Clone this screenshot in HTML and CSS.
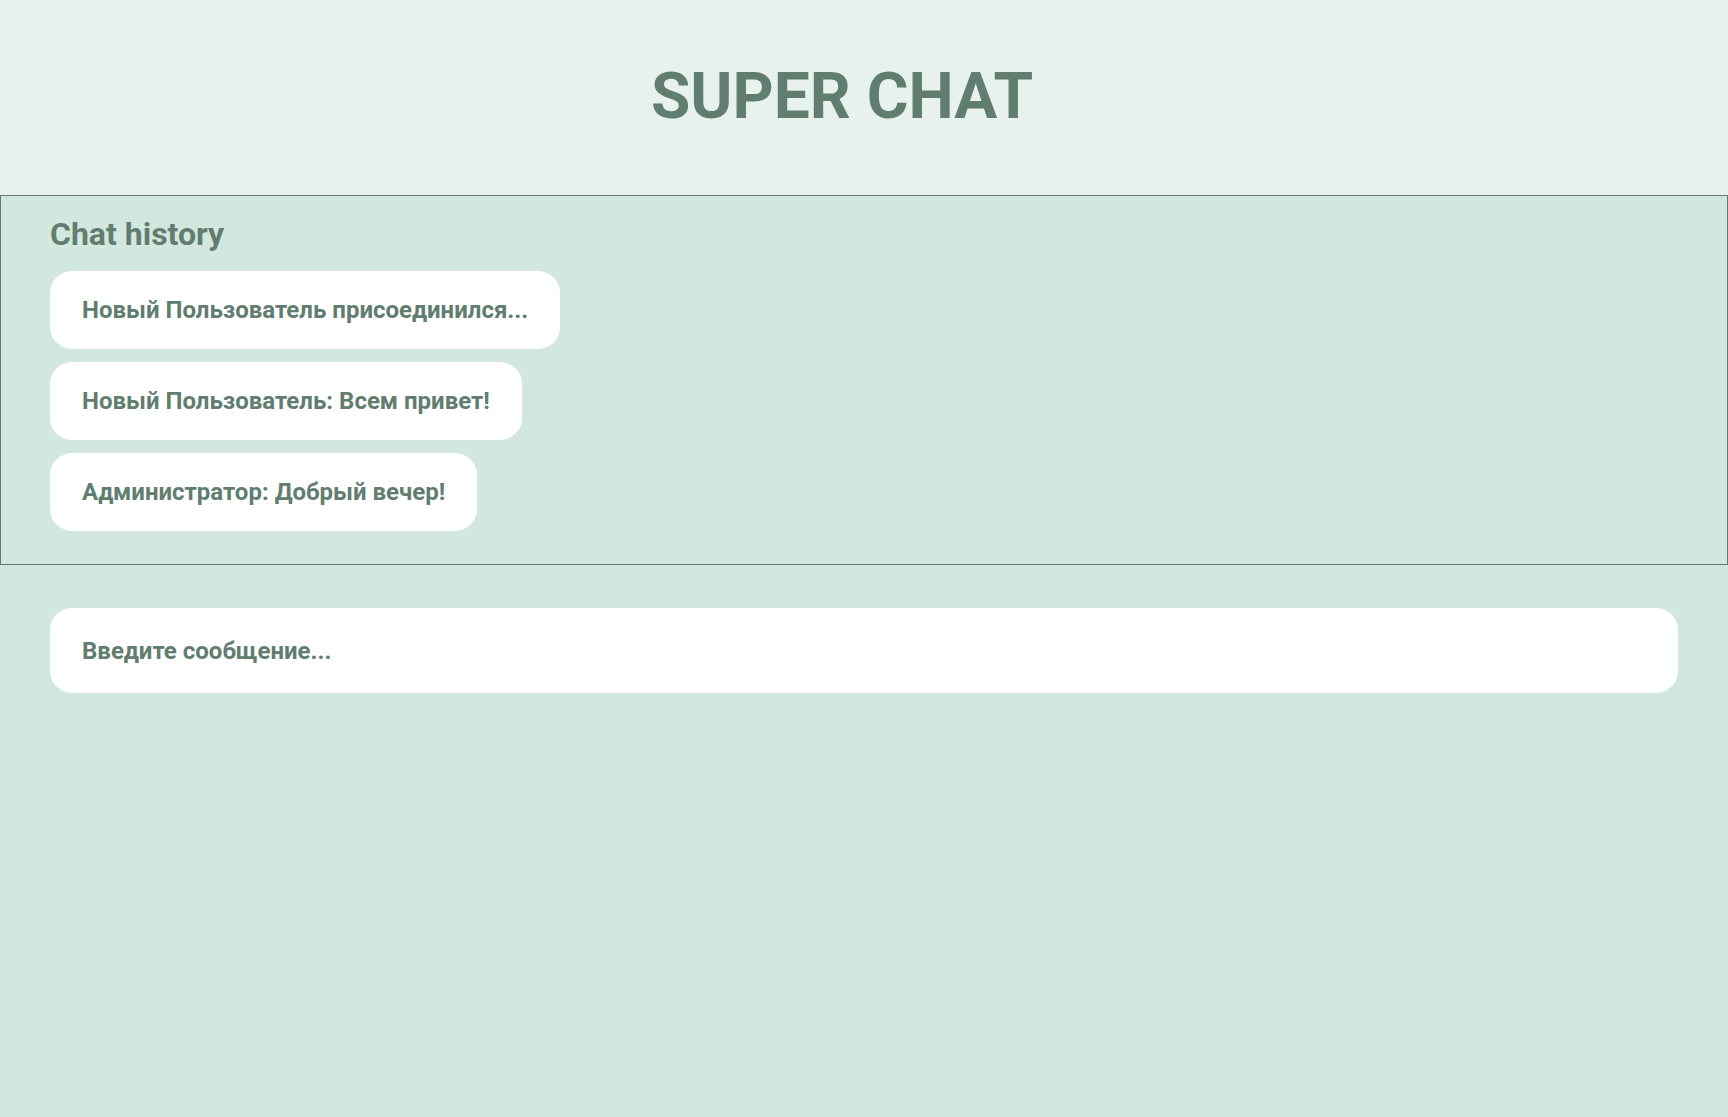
FILE: index.html
```html
<!DOCTYPE html>
<html lang="ru">
<head>
<meta charset="utf-8">
<title>Super Chat</title>
<link rel="stylesheet" href="styles.css">
</head>
<body>
<header class="header">
  <h1 class="title">SUPER CHAT</h1>
</header>
<main class="main">
  <section class="history">
    <h2 class="history-title">Chat history</h2>
    <div class="messages">
      <div class="message">Новый Пользователь присоединился...</div>
      <div class="message">Новый Пользователь: Всем привет!</div>
      <div class="message">Администратор: Добрый вечер!</div>
    </div>
  </section>
  <div class="composer">
    <input class="input" type="text" placeholder="Введите сообщение...">
  </div>
</main>
</body>
</html>
```
FILE: styles.css
```css
html, body {
  margin: 0;
  padding: 0;
  height: 100%;
}
body {
  font-family: Roboto, "Noto Sans", sans-serif;
  background: #d2e8de;
  color: #617d70;
}
.header {
  background: #e8f2ed;
  height: 195px;
  display: flex;
  align-items: center;
  justify-content: center;
  padding-right: 44px;
  box-sizing: border-box;
}
.title {
  margin: 0;
  font-size: 64px;
  font-weight: 700;
  color: #617d70;
  padding-bottom: 2px;
}
.main {
  background: #d2e8de;
}
.history {
  border: 1px solid #5f7d70;
  padding: 0 49px 33px 49px;
}
.history-title {
  margin: 19px 0 18px;
  font-size: 32px;
  font-weight: 700;
  color: #617d70;
}
.messages {
  display: flex;
  flex-direction: column;
  align-items: flex-start;
  gap: 13px;
}
.message {
  background: #ffffff;
  border-radius: 22px;
  padding: 0 32px;
  height: 78px;
  display: flex;
  align-items: center;
  font-size: 24px;
  font-weight: 700;
}
.composer {
  padding: 43px 50px 0;
}
.input {
  display: block;
  box-sizing: border-box;
  width: 100%;
  height: 85px;
  border: none;
  outline: none;
  border-radius: 22px;
  background: #ffffff;
  padding: 0 32px;
  font-family: Roboto, "Noto Sans", sans-serif;
  font-size: 24px;
  font-weight: 700;
  color: #617d70;
}
.input::placeholder {
  color: #617d70;
  opacity: 1;
}
```
